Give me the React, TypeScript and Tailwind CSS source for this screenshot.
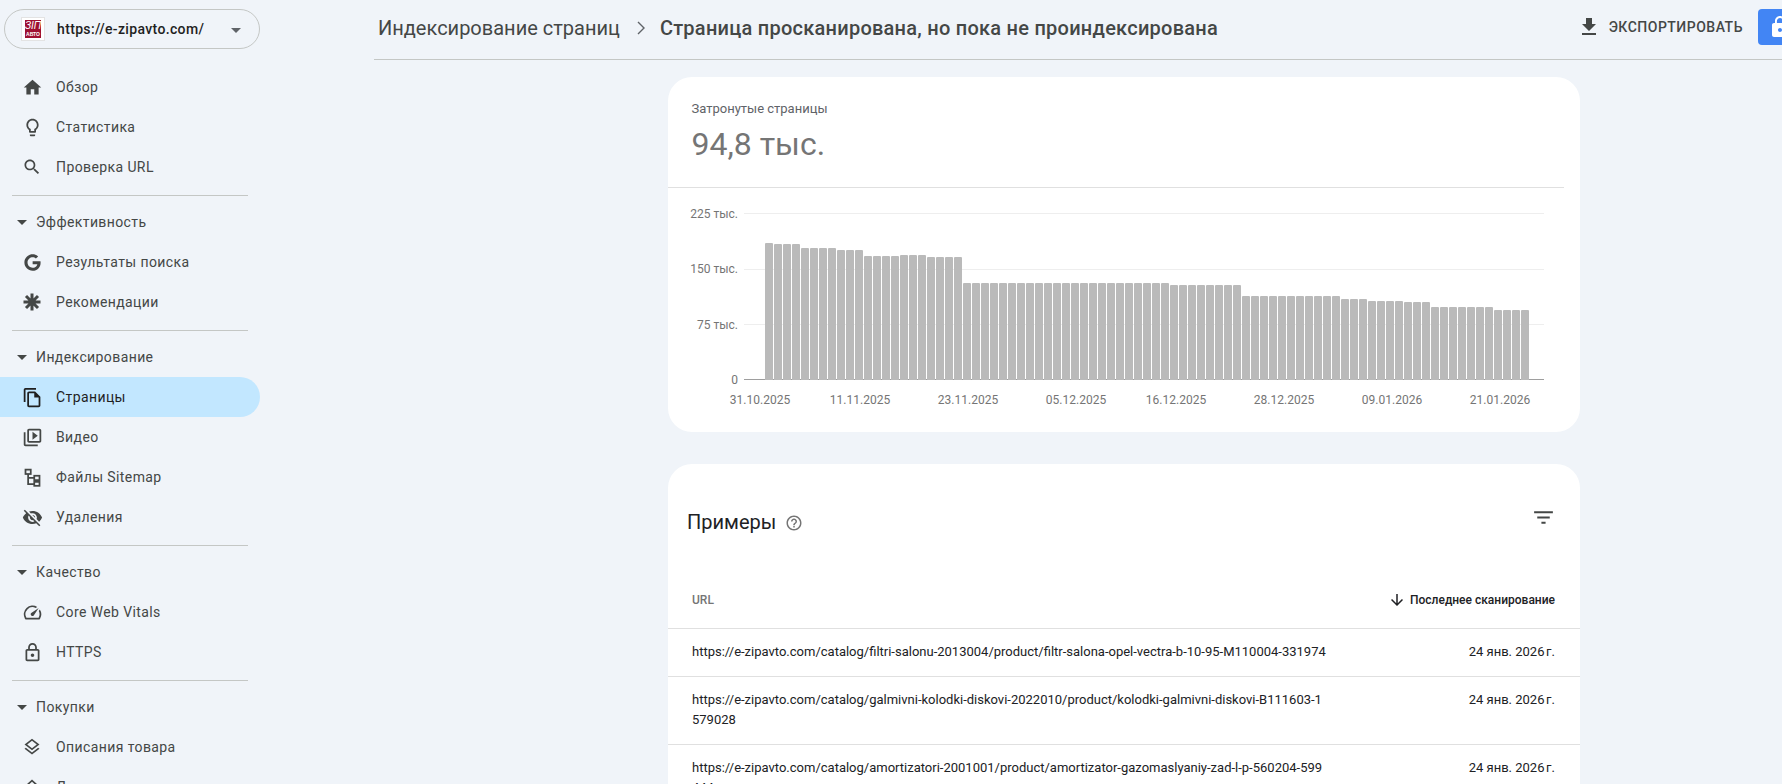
import React from "react";
import { FaGoogle } from "react-icons/fa";

const sans = "font-['Roboto','Liberation_Sans',sans-serif]";
const navIcon = "w-[21px] h-[21px]";

const Icon = ({ d, className = "w-6 h-6" }: { d: string; className?: string }) => (
  <svg viewBox="0 0 24 24" className={className} fill="currentColor">
    <path d={d} />
  </svg>
);

const paths = {
  home: "M10 20v-6h4v6h5v-8h3L12 3 2 12h3v8z",
  bulb: "M9 21c0 .55.45 1 1 1h4c.55 0 1-.45 1-1v-1H9v1zm3-19C8.14 2 5 5.14 5 9c0 2.38 1.19 4.47 3 5.74V17c0 .55.45 1 1 1h6c.55 0 1-.45 1-1v-2.26c1.81-1.27 3-3.36 3-5.74 0-3.86-3.14-7-7-7zm2.85 11.1l-.85.6V16h-4v-2.3l-.85-.6C7.8 12.16 7 10.63 7 9c0-2.76 2.24-5 5-5s5 2.24 5 5c0 1.63-.8 3.16-2.15 4.1z",
  search: "M15.5 14h-.79l-.28-.27C15.41 12.59 16 11.11 16 9.5 16 5.91 13.09 3 9.5 3S3 5.91 3 9.5 5.91 16 9.5 16c1.61 0 3.09-.59 4.23-1.57l.27.28v.79l5 4.99L20.49 19l-4.99-5zm-6 0C7.01 14 5 11.99 5 9.5S7.01 5 9.5 5 14 7.01 14 9.5 11.99 14 9.5 14z",
  pages: "M16 1H4c-1.1 0-2 .9-2 2v14h2V3h12V1zm-1 4H8c-1.1 0-1.99.9-1.99 2L6 21c0 1.1.89 2 1.99 2H19c1.1 0 2-.9 2-2V11l-6-6zM8 21V7h6v5h5v9H8z",
  video: "M4 6H2v14c0 1.1.9 2 2 2h14v-2H4V6zm16-4H8c-1.1 0-2 .9-2 2v12c0 1.1.9 2 2 2h12c1.1 0 2-.9 2-2V4c0-1.1-.9-2-2-2zm0 14H8V4h12v12zM12 5.5v9l6-4.5z",
  eyeOff: "M12 7c2.76 0 5 2.24 5 5 0 .65-.13 1.26-.36 1.83l2.92 2.92c1.51-1.26 2.7-2.89 3.43-4.75-1.73-4.39-6-7.5-11-7.5-1.4 0-2.74.25-3.98.7l2.16 2.16C10.74 7.13 11.35 7 12 7zM2 4.27l2.28 2.28.46.46C3.08 8.3 1.78 10.02 1 12c1.73 4.39 6 7.5 11 7.5 1.55 0 3.03-.3 4.38-.84l.42.42L19.73 22 21 20.73 3.27 3 2 4.27zM7.53 9.8l1.55 1.55c-.05.21-.08.43-.08.65 0 1.66 1.34 3 3 3 .22 0 .44-.03.65-.08l1.55 1.55c-.67.33-1.41.53-2.2.53-2.76 0-5-2.24-5-5 0-.79.2-1.53.53-2.2zm4.31-.78l3.15 3.15.02-.16c0-1.66-1.34-3-3-3l-.17.01z",
  speed: "M20.38 8.57l-1.23 1.85a8 8 0 0 1-.22 7.58H5.07A8 8 0 0 1 15.58 6.85l1.85-1.23A10 10 0 0 0 3.35 19a2 2 0 0 0 1.72 1h13.85a2 2 0 0 0 1.74-1 10 10 0 0 0-.27-10.44zm-9.79 6.84a2 2 0 0 0 2.83 0l5.66-8.49-8.49 5.66a2 2 0 0 0 0 2.83z",
  lock: "M18 8h-1V6c0-2.76-2.24-5-5-5S7 3.24 7 6v2H6c-1.1 0-2 .9-2 2v10c0 1.1.9 2 2 2h12c1.1 0 2-.9 2-2V10c0-1.1-.9-2-2-2zM9 6c0-1.66 1.34-3 3-3s3 1.34 3 3v2H9V6zm9 14H6V10h12v10zm-6-3c1.1 0 2-.9 2-2s-.9-2-2-2-2 .9-2 2 .9 2 2 2z",
  layers: "M11.99 18.54l-7.37-5.73L3 14.07l9 7 9-7-1.63-1.27-7.38 5.74zM12 16l7.36-5.73L21 9l-9-7-9 7 1.63 1.27L12 16zm0-11.47L17.74 9 12 13.47 6.26 9 12 4.53z",
  store: "M12 5.69l5 4.5V18h-2v-6H9v6H7v-7.81l5-4.5M12 3L2 12h3v8h6v-6h2v6h6v-8h3L12 3z",
  download: "M19 9h-4V3H9v6H5l7 7 7-7zM5 18v2h14v-2H5z",
  help: "M11 18h2v-2h-2v2zm1-16C6.48 2 2 6.48 2 12s4.48 10 10 10 10-4.48 10-10S17.52 2 12 2zm0 18c-4.41 0-8-3.59-8-8s3.59-8 8-8 8 3.59 8 8-3.59 8-8 8zm0-14c-2.21 0-4 1.79-4 4h2c0-1.1.9-2 2-2s2 .9 2 2c0 2-3 1.75-3 5h2c0-2.25 3-2.5 3-5 0-2.21-1.79-4-4-4z",
  filter: "M10 18h4v-2h-4v2zM3 6v2h18V6H3zm3 7h12v-2H6v2z",
  arrowDown: "M20 12l-1.41-1.41L13 16.17V4h-2v12.17l-5.58-5.59L4 12l8 8 8-8z",
  lockFilled: "M18 8h-1V6c0-2.76-2.24-5-5-5S7 3.24 7 6v2H6c-1.1 0-2 .9-2 2v10c0 1.1.9 2 2 2h12c1.1 0 2-.9 2-2V10c0-1.1-.9-2-2-2zm-6 9c-1.1 0-2-.9-2-2s.9-2 2-2 2 .9 2 2-.9 2-2 2zm3.1-9H8.9V6c0-1.71 1.39-3.1 3.1-3.1 1.71 0 3.1 1.39 3.1 3.1v2z",
};

const Spark = () => (
  <svg viewBox="0 0 24 24" className="w-6 h-6" stroke="currentColor" strokeWidth="3">
    <path d="M12 3.5v17M3.5 12h17M6 6l12 12M18 6L6 18" />
  </svg>
);

const SitemapIcon = () => (
  <svg viewBox="0 0 24 24" className={navIcon} fill="none" stroke="currentColor" strokeWidth="2">
    <rect x="4" y="3" width="6" height="5" />
    <rect x="14" y="10" width="6" height="5" />
    <rect x="14" y="17" width="6" height="4.5" />
    <path d="M7 8v11.5h7M7 12.5h7" />
  </svg>
);

const NavItem = ({ icon, label, active }: { icon: React.ReactNode; label: string; active?: boolean }) => (
  <div className={`h-10 w-[260px] flex items-center pl-[20px] rounded-r-full shrink-0 ${active ? "bg-[#c2e7ff] text-[#1f1f1f]" : "text-[#444746]"}`}>
    <span className="w-6 h-6 flex items-center justify-center shrink-0">{icon}</span>
    <span className="ml-3 text-[14px] tracking-[0.4px]">{label}</span>
  </div>
);

const Section = ({ label }: { label: string }) => (
  <div className="h-[46px] pt-[6px] flex items-center pl-[17px] text-[#444746] shrink-0">
    <span className="w-0 h-0 border-x-[5px] border-x-transparent border-t-[5px] border-t-[#444746]" />
    <span className="ml-[9px] text-[14px] tracking-[0.4px]">{label}</span>
  </div>
);

const Divider = () => <div className="h-px bg-[#c4c7c5] ml-3 w-[236px] shrink-0" />;

const Sidebar = () => (
  <aside className="w-[374px] shrink-0 h-full overflow-hidden pt-[9px]">
    <div className="ml-1 w-[256px] h-10 rounded-full border border-[#c4c7c5] flex items-center pl-4 relative">
      <div className="w-6 h-6 bg-white border border-[#e3e3e3] flex items-center justify-center shrink-0">
        <div className="w-4 h-[18px] bg-[#9e1030] text-white flex flex-col items-center justify-center leading-none font-bold font-['Liberation_Sans',sans-serif]">
          <span className="text-[10px] leading-[10px] italic font-normal">ЗІП</span>
          <span className="text-[5px] leading-[6px]">АВТО</span>
        </div>
      </div>
      <span className="ml-3 text-[14px] font-medium text-[#1f1f1f] tracking-[0.35px]">https://e-zipavto.com/</span>
      <span className="absolute left-[226px] top-[18px] w-0 h-0 border-x-[5px] border-x-transparent border-t-[5px] border-t-[#5f6368]" />
    </div>
    <div className="mt-[18px] flex flex-col">
      <NavItem icon={<Icon d={paths.home} className={navIcon} />} label="Обзор" />
      <NavItem icon={<Icon d={paths.bulb} className={navIcon} />} label="Статистика" />
      <NavItem icon={<Icon d={paths.search} className="w-5 h-5" />} label="Проверка URL" />
      <div className="h-2" />
      <Divider />
      <Section label="Эффективность" />
      <NavItem icon={<FaGoogle className="w-[17px] h-[17px]" />} label="Результаты поиска" />
      <NavItem icon={<Spark />} label="Рекомендации" />
      <div className="h-2" />
      <Divider />
      <Section label="Индексирование" />
      <NavItem icon={<Icon d={paths.pages} className={navIcon} />} label="Страницы" active />
      <NavItem icon={<Icon d={paths.video} className={navIcon} />} label="Видео" />
      <NavItem icon={<SitemapIcon />} label="Файлы Sitemap" />
      <NavItem icon={<Icon d={paths.eyeOff} className={navIcon} />} label="Удаления" />
      <div className="h-2" />
      <Divider />
      <Section label="Качество" />
      <NavItem icon={<Icon d={paths.speed} className={navIcon} />} label="Core Web Vitals" />
      <NavItem icon={<Icon d={paths.lock} className={navIcon} />} label="HTTPS" />
      <div className="h-2" />
      <Divider />
      <Section label="Покупки" />
      <NavItem icon={<Icon d={paths.layers} className="w-5 h-5" />} label="Описания товара" />
      <NavItem icon={<Icon d={paths.store} className="w-5 h-5" />} label="Листинги продавцов" />
    </div>
  </aside>
);

const Header = () => (
  <header className="h-[60px] shrink-0 border-b border-[#c4c7c5] flex items-center pl-1 pb-[5px] relative">
    <span className="mt-[2px] text-[20px] text-[#444746]">Индексирование страниц</span>
    <svg viewBox="0 0 24 24" className="mt-[2px] w-6 h-6 ml-[9px] mr-[7px] text-[#5f6368]" fill="none" stroke="currentColor" strokeWidth="1.4">
      <path d="M9 6l6 6-6 6" />
    </svg>
    <span className="mt-[2px] text-[20px] text-[#444746] font-medium tracking-[0.25px]">Страница просканирована, но пока не проиндексирована</span>
    <div className="ml-auto flex items-center pr-0">
      <Icon d={paths.download} className="w-6 h-6 text-[#444746]" />
      <span className="ml-2 text-[14px] font-medium text-[#444746] tracking-[0.5px]">ЭКСПОРТИРОВАТЬ</span>
      <div className="ml-[15px] w-[24px] h-9 bg-[#4285f4] rounded-l-[4px] flex items-center justify-start overflow-hidden pl-[10px]">
        <Icon d={paths.lockFilled} className="w-6 h-6 text-white shrink-0" />
      </div>
    </div>
  </header>
);

// bar tops read off the chart, [top y, count]
const barRuns: [number, number][] = [
  [243, 1], [244, 3], [248, 4], [250, 3], [256, 4], [255, 3], [257, 4],
  [283, 23], [285, 8], [296, 11], [299, 3], [301, 4], [302, 3], [307, 7], [310, 4],
];
const barTops = barRuns.flatMap(([top, n]) => Array.from({ length: n }, () => top));

const xLabels: [string, number][] = [
  ["31.10.2025", 760], ["11.11.2025", 860], ["23.11.2025", 968], ["05.12.2025", 1076],
  ["16.12.2025", 1176], ["28.12.2025", 1284], ["09.01.2026", 1392], ["21.01.2026", 1500],
];
const yLabels: [string, number][] = [["225 тыс.", 214], ["150 тыс.", 269], ["75 тыс.", 325], ["0", 380]];

// svg coordinates are the page's, shifted by the card's corner
const Chart = () => (
  <svg viewBox="668 188 896 225" className="w-[896px] h-[225px] block">
    {[213.5, 269.5, 324.5].map((y) => (
      <line key={y} x1="744" x2="1544" y1={y} y2={y} stroke="#eeeeee" />
    ))}
    <line x1="744" x2="1544" y1="379.5" y2="379.5" stroke="#9e9e9e" />
    {barTops.map((top, i) => (
      <path
        key={i}
        d={`M${765 + i * 9} 380V${top + 1}q0-1 1-1h6q1 0 1 1V380z`}
        fill="#bababa"
      />
    ))}
    {yLabels.map(([t, y]) => (
      <text key={t} x="738" y={y + 4} textAnchor="end" fontSize="12" fill="#757575">{t}</text>
    ))}
    {xLabels.map(([t, x]) => (
      <text key={t} x={x} y="404" textAnchor="middle" fontSize="12" fill="#757575">{t}</text>
    ))}
  </svg>
);

const rows = [
  { url: "https://e-zipavto.com/catalog/filtri-salonu-2013004/product/filtr-salona-opel-vectra-b-10-95-M110004-331974", h: "h-12" },
  { url: "https://e-zipavto.com/catalog/galmivni-kolodki-diskovi-2022010/product/kolodki-galmivni-diskovi-B111603-1579028", h: "h-[68px]" },
  { url: "https://e-zipavto.com/catalog/amortizatori-2001001/product/amortizator-gazomaslyaniy-zad-l-p-560204-599444", h: "h-[68px]" },
];

export default function App() {
  return (
    <div className={`flex h-screen w-full overflow-hidden bg-[#f0f4f9] ${sans}`}>
      <Sidebar />
      <main className="flex-1 min-w-0 flex flex-col h-full overflow-hidden">
        <Header />
        <div className="ml-[294px] w-[912px] pt-[17px] flex flex-col gap-8 shrink-0">
          <section className="bg-white rounded-3xl h-[355px] overflow-hidden">
            <div className="w-[896px] h-[111px] border-b border-[#e0e0e0] pl-[23.5px] pt-[23px]">
              <div className="text-[13px] leading-[18px] text-[#5f6368]">Затронутые страницы</div>
              <div className="mt-[6px] text-[32px] leading-[40px] text-[#757575]">94,8 тыс.</div>
            </div>
            <Chart />
          </section>
          <section className="bg-white rounded-3xl">
            <div className="h-[164px] relative flex items-start pl-[19px] pt-[46px]">
              <span className="text-[20px] leading-6 text-[#202124]">Примеры</span>
              <Icon d={paths.help} className="w-[18px] h-[18px] ml-[9px] mt-[4px] text-[#757575]" />
              <Icon d={paths.filter} className="absolute right-[24px] top-[41px] w-[25px] h-[25px] text-[#444746]" />
              <div className="absolute left-6 right-[25px] bottom-3 h-8 flex items-center justify-between">
                <span className="text-[12px] font-medium text-[#757575]">URL</span>
                <span className="flex items-center text-[12px] font-medium text-[#202124]">
                  <Icon d={paths.arrowDown} className="w-[18px] h-[18px] mr-1" />
                  Последнее сканирование
                </span>
              </div>
            </div>
            <div className="border-t border-[#e0e0e0]">
              {rows.map((r) => (
                <div key={r.url} className={`${r.h} border-b border-[#e0e0e0] flex justify-between pl-6 pr-[25px] pt-[13px] text-[13px] leading-5 text-[#202124]`}>
                  <div className="w-[635px] break-all">{r.url}</div>
                  <div className="whitespace-nowrap">24 янв. 2026{"\u202F"}г.</div>
                </div>
              ))}
            </div>
          </section>
        </div>
      </main>
    </div>
  );
}
